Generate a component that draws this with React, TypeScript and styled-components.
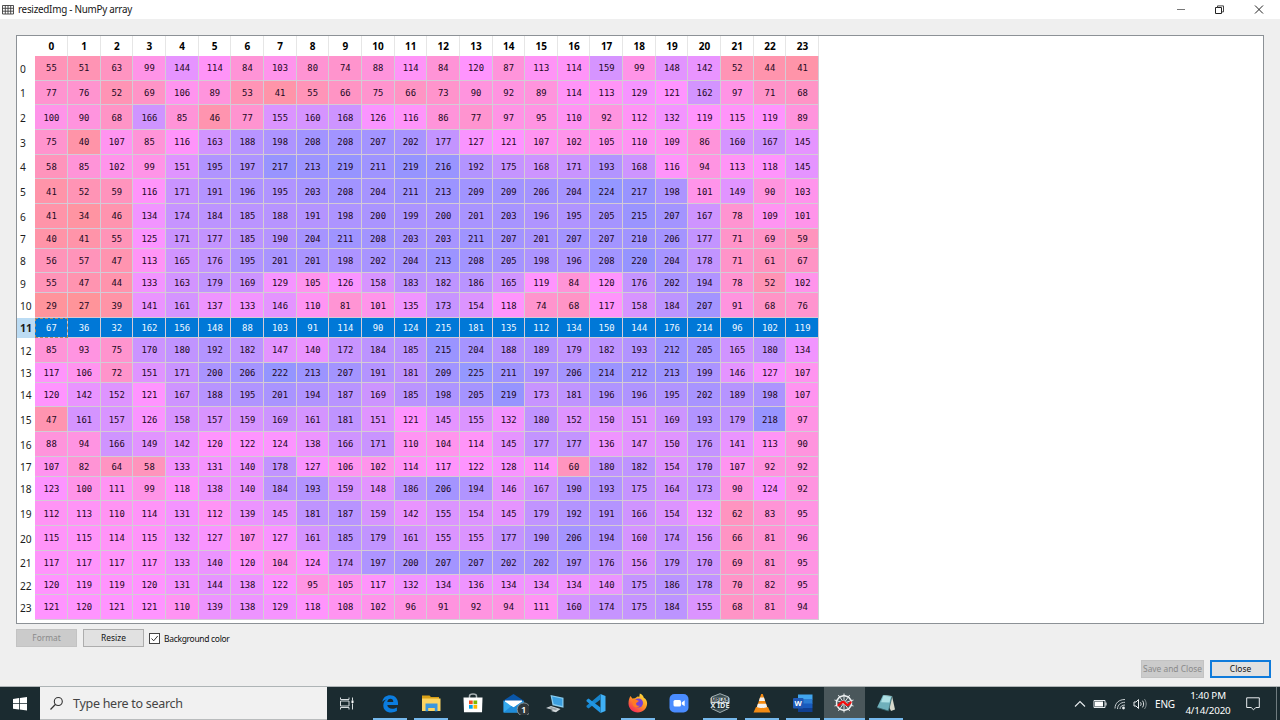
import React from 'react';
import styled, { createGlobalStyle } from 'styled-components';

const GlobalStyle = createGlobalStyle`
  html, body { margin: 0; padding: 0; overflow: hidden; }
  *, *::before, *::after { box-sizing: border-box; }
`;

const UI_FONT = '"Noto Sans", "Open Sans", sans-serif';
const SMALL_FONT = '"Noto Sans", "DejaVu Sans", sans-serif';

const DATA: number[][] = [
  [55, 51, 63, 99, 144, 114, 84, 103, 80, 74, 88, 114, 84, 120, 87, 113, 114, 159, 99, 148, 142, 52, 44, 41],
  [77, 76, 52, 69, 106, 89, 53, 41, 55, 66, 75, 66, 73, 90, 92, 89, 114, 113, 129, 121, 162, 97, 71, 68],
  [100, 90, 68, 166, 85, 46, 77, 155, 160, 168, 126, 116, 86, 77, 97, 95, 110, 92, 112, 132, 119, 115, 119, 89],
  [75, 40, 107, 85, 116, 163, 188, 198, 208, 208, 207, 202, 177, 127, 121, 107, 102, 105, 110, 109, 86, 160, 167, 145],
  [58, 85, 102, 99, 151, 195, 197, 217, 213, 219, 211, 219, 216, 192, 175, 168, 171, 193, 168, 116, 94, 113, 118, 145],
  [41, 52, 59, 116, 171, 191, 196, 195, 203, 208, 204, 211, 213, 209, 209, 206, 204, 224, 217, 198, 101, 149, 90, 103],
  [41, 34, 46, 134, 174, 184, 185, 188, 191, 198, 200, 199, 200, 201, 203, 196, 195, 205, 215, 207, 167, 78, 109, 101],
  [40, 41, 55, 125, 171, 177, 185, 190, 204, 211, 208, 203, 203, 211, 207, 201, 207, 207, 210, 206, 177, 71, 69, 59],
  [56, 57, 47, 113, 165, 176, 195, 201, 201, 198, 202, 204, 213, 208, 205, 198, 196, 208, 220, 204, 178, 71, 61, 67],
  [55, 47, 44, 133, 163, 179, 169, 129, 105, 126, 158, 183, 182, 186, 165, 119, 84, 120, 176, 202, 194, 78, 52, 102],
  [29, 27, 39, 141, 161, 137, 133, 146, 110, 81, 101, 135, 173, 154, 118, 74, 68, 117, 158, 184, 207, 91, 68, 76],
  [67, 36, 32, 162, 156, 148, 88, 103, 91, 114, 90, 124, 215, 181, 135, 112, 134, 150, 144, 176, 214, 96, 102, 119],
  [85, 93, 75, 170, 180, 192, 182, 147, 140, 172, 184, 185, 215, 204, 188, 189, 179, 182, 193, 212, 205, 165, 180, 134],
  [117, 106, 72, 151, 171, 200, 206, 222, 213, 207, 191, 181, 209, 225, 211, 197, 206, 214, 212, 213, 199, 146, 127, 107],
  [120, 142, 152, 121, 167, 188, 195, 201, 194, 187, 169, 185, 198, 205, 219, 173, 181, 196, 196, 195, 202, 189, 198, 107],
  [47, 161, 157, 126, 158, 157, 159, 169, 161, 181, 151, 121, 145, 155, 132, 180, 152, 150, 151, 169, 193, 179, 218, 97],
  [88, 94, 166, 149, 142, 120, 122, 124, 138, 166, 171, 110, 104, 114, 145, 177, 177, 136, 147, 150, 176, 141, 113, 90],
  [107, 82, 64, 58, 133, 131, 140, 178, 127, 106, 102, 114, 117, 122, 128, 114, 60, 180, 182, 154, 170, 107, 92, 92],
  [123, 100, 111, 99, 118, 138, 140, 184, 193, 159, 148, 186, 206, 194, 146, 167, 190, 193, 175, 164, 173, 90, 124, 92],
  [112, 113, 110, 114, 131, 112, 139, 145, 181, 187, 159, 142, 155, 154, 145, 179, 192, 191, 166, 154, 132, 62, 83, 95],
  [115, 115, 114, 115, 132, 127, 107, 127, 161, 185, 179, 161, 155, 155, 177, 190, 206, 194, 160, 174, 156, 66, 81, 96],
  [117, 117, 117, 117, 133, 140, 120, 104, 124, 174, 197, 200, 207, 207, 202, 202, 197, 176, 156, 179, 170, 69, 81, 95],
  [120, 119, 119, 120, 131, 144, 138, 122, 95, 105, 117, 132, 134, 136, 134, 134, 134, 140, 175, 186, 178, 70, 82, 95],
  [121, 120, 121, 121, 110, 139, 138, 129, 118, 108, 102, 96, 91, 92, 94, 111, 160, 174, 175, 184, 155, 68, 81, 94],
];

const SHORT_ROWS = [7, 9, 11, 13, 17, 22];
const SELECTED_ROW = 11;
const V_MIN = 27;
const V_MAX = 225;

// Hue runs from blue (maximum) to red (minimum), laid at 60% over white.
function heat(value: number): string {
  const hue = 0.66 + (0.33 * (V_MAX - value)) / (V_MAX - V_MIN);
  const channel = (n: number) => {
    const k = (n + hue * 6) % 6;
    const c = 1 - 0.7 * Math.max(0, Math.min(k, 4 - k, 1));
    return Math.round(255 * (0.6 * c + 0.4));
  };
  return `rgb(${channel(5)}, ${channel(3)}, ${channel(1)})`;
}

const Screen = styled.div`
  width: 1280px;
  height: 720px;
  display: flex;
  flex-direction: column;
  background: #efefef;
  color: #111;
  font-family: ${UI_FONT};
  overflow: hidden;
`;

const TitleBar = styled.header`
  height: 19px;
  flex: none;
  display: flex;
  align-items: center;
  background: #fff;
  padding-left: 2px;
`;

const Title = styled.span`
  margin-left: 4px;
  font-size: 9.9px;
  letter-spacing: -0.27px;
  line-height: 19px;
  flex: 1;
  color: #161616;
  white-space: nowrap;
`;

const WindowButtons = styled.div`
  display: flex;
  align-items: center;
  gap: 29px;
  padding-right: 16px;
`;

const Body = styled.main`
  flex: 1;
  min-height: 0;
  padding: 16px 16px 0;
  display: flex;
  flex-direction: column;
`;

const TableFrame = styled.section`
  width: 1248px;
  height: 589px;
  flex: none;
  background: #fff;
  border: 1px solid #8c9196;
  overflow: hidden;
`;

const Row = styled.div<{ $height: number }>`
  display: flex;
  height: ${(p) => p.$height}px;
`;

const RowHead = styled.div<{ $selected?: boolean }>`
  width: 18.333px;
  flex: none;
  display: flex;
  align-items: center;
  padding: 1px 0 0 3px;
  font-size: ${(p) => (p.$selected ? 10.6 : 10.2)}px;
  letter-spacing: -0.15px;
  font-weight: ${(p) => (p.$selected ? 700 : 400)};
  background: ${(p) => (p.$selected ? '#bcdcf4' : '#fff')};
  color: #1c1c1c;
`;

const ColumnHead = styled.div`
  width: 32.667px;
  flex: none;
  display: flex;
  align-items: center;
  justify-content: center;
  padding: 0 0 0.4px 0.6px;
  font-size: 10px;
  font-weight: 700;
  color: #000;
  border-right: 1px solid #e6e6e6;
`;

const Cell = styled.div<{ $color: string; $selected?: boolean; $focused?: boolean }>`
  width: 32.667px;
  flex: none;
  display: flex;
  align-items: center;
  justify-content: center;
  padding: 1px 0 0 0.6px;
  font-family: "DejaVu Sans Mono", monospace;
  font-size: 8.9px;
  background: ${(p) => p.$color};
  color: ${(p) => (p.$selected ? '#f2f9ff' : '#1c0822')};
  border-right: 1px solid #d4cbd6;
  border-bottom: 1px solid #d4cbd6;
  outline: ${(p) => (p.$focused ? '1px dashed #b08a62' : 'none')};
  outline-offset: -1px;
`;

const ToolRow = styled.div`
  display: flex;
  align-items: center;
  gap: 6px;
  height: 18px;
  margin-top: 5px;
`;

const PushButton = styled.button<{ $width: number; $kind?: 'disabled' | 'default' }>`
  width: ${(p) => p.$width}px;
  height: 18px;
  padding: 0;
  font-family: ${SMALL_FONT};
  font-size: 8.4px;
  line-height: 14px;
  white-space: nowrap;
  color: ${(p) => (p.$kind === 'disabled' ? '#8a8a8a' : '#111')};
  background: ${(p) => (p.$kind === 'disabled' ? '#cbcbcb' : '#e1e1e1')};
  border: ${(p) =>
    p.$kind === 'default' ? '2px solid #0f7bdb' : p.$kind === 'disabled' ? '1px solid #c3c3c3' : '1px solid #adadad'};
`;

const Check = styled.label`
  display: flex;
  align-items: center;
  gap: 4px;
  margin-left: -1px;
  font-family: ${SMALL_FONT};
  font-size: 8.5px;
  letter-spacing: -0.32px;
`;

const DialogButtons = styled.div`
  display: flex;
  justify-content: flex-end;
  gap: 6px;
  margin-top: 13px;
  margin-right: -7px;
`;

const Taskbar = styled.footer`
  height: 34px;
  flex: none;
  display: flex;
  background: #1b2b30;
  border-top: 1px solid #aeb4b6;
  color: #fff;
`;

const StartButton = styled.div`
  width: 40px;
  display: flex;
  align-items: center;
  justify-content: center;
`;

const SearchBox = styled.div`
  width: 287px;
  background: #f1f1f1;
  border-bottom: 1px solid #b9bcbd;
  display: flex;
  align-items: center;
  padding-left: 9px;
  gap: 9px;
  color: #444;
  font-size: 12.5px;
  letter-spacing: -0.28px;
`;

const TaskView = styled.div`
  width: 42.3px;
  display: flex;
  align-items: center;
  justify-content: center;
  padding-right: 3px;
`;

const AppItem = styled.div<{ $open?: boolean; $active?: boolean }>`
  width: 41.3px;
  flex: none;
  display: flex;
  flex-direction: column;
  align-items: center;
  justify-content: space-between;
  background: ${(p) => (p.$active ? '#4a575b' : 'transparent')};
  padding-top: 4px;
  &::after {
    content: '';
    height: 2px;
    width: ${(p) => (p.$active ? '100%' : '34px')};
    background: ${(p) => (p.$open || p.$active ? '#76b9ed' : 'transparent')};
  }
`;

const Tray = styled.div`
  margin-left: auto;
  display: flex;
  align-items: center;
  font-size: 10px;
`;

const TrayIcon = styled.span<{ $width: number }>`
  width: ${(p) => p.$width}px;
  display: flex;
  justify-content: center;
`;

const Language = styled.span`
  width: 32px;
  text-align: center;
  font-size: 10px;
  letter-spacing: -0.2px;
`;

const Clock = styled.div`
  width: 54px;
  text-align: center;
  font-size: 9.8px;
  letter-spacing: -0.15px;
  line-height: 15px;
  padding-bottom: 2px;
  white-space: nowrap;
`;

const NotificationArea = styled.div`
  width: 41px;
  padding-left: 11px;
`;

const ShowDesktop = styled.div`
  width: 4px;
  align-self: stretch;
  border-left: 1px solid #6f7b7f;
`;

const Drawing = styled.svg`
  display: block;
  flex: none;
`;

const Icon = ({ children, w = 24, h = 24 }: { children: React.ReactNode; w?: number; h?: number }) => (
  <Drawing width={w} height={h} viewBox={`0 0 ${w} ${h}`} fill="none">
    {children}
  </Drawing>
);

const svgFont = 'Noto Sans, sans-serif';

const EdgeIcon = () => (
  <Icon>
    <path
      d="M4.300 11C5 6.300 8.300 4.300 12 4.300c4.800 0 8 3.300 8 8v1.700H9.300c.3 2.500 2.300 3.700 4.900 3.700 1.800 0 3.400-.5 4.700-1.300v3.700c-1.500.8-3.500 1.300-5.600 1.300-4.900 0-8-2.700-8-7 0-2.700 1.300-5 3.700-6.200C6.800 8.600 5.300 9.500 4.300 11zm5-.1h6c0-2-1.100-3.100-2.900-3.100-1.700 0-2.800 1.200-3.100 3.100z"
      fill="#0b7de0"
    />
  </Icon>
);

const FolderIcon = () => (
  <Icon>
    <path d="M3 4.500h7.500l1.500 1.500H20v3H3z" fill="#d9a016" />
    <path d="M3 7.500h18.500V20H3z" fill="#fcd462" />
    <path d="M6.500 20.300v-7.800h12v7.800h-2.700v-3.300h-6.600v3.300z" fill="#3a96dd" />
  </Icon>
);

const StoreIcon = () => (
  <Icon>
    <path d="M8.500 8V5C8.500 2.300 15.500 2.300 15.500 5V8" stroke="#aab3b5" strokeWidth="1.500" />
    <path d="M2.500 6.500h19l-.5 14.700H3z" fill="#fff" />
    <path d="M8 9.500h3.700v3.700H8z" fill="#f25022" />
    <path d="M12.500 9.500h3.700v3.700h-3.700z" fill="#7fba00" />
    <path d="M8 14h3.700v3.700H8z" fill="#00a4ef" />
    <path d="M12.500 14h3.700v3.700h-3.700z" fill="#ffb900" />
  </Icon>
);

const MailIcon = () => (
  <Icon w={30}>
    <path d="M4.500 9.500L14.500 3l10 6.500V21h-20z" fill="#0a56a8" />
    <path d="M6 9.500h17v7H6z" fill="#fff" />
    <path d="M4.500 9.500l10 7 10-7v12h-20z" fill="#35a9ec" />
    <path d="M4.500 21.500l8-6.500 2 1.500L24.500 10v11.500z" fill="#1f8ddb" />
    <circle cx="24.800" cy="18.500" r="6.600" fill="#30373a" stroke="#8e979a" strokeWidth=".9" />
    <text x="24.800" y="22" textAnchor="middle" fontSize="9.500" fontWeight="600" fill="#fff" fontFamily={svgFont}>1</text>
  </Icon>
);

const ComputerIcon = () => (
  <Icon>
    <path d="M7.500 4l13 2.700v10L9.500 14.300z" fill="#8accee" />
    <path d="M9 5.500l10.300 2.200v7.300l-8.600-2z" fill="#3b9fe0" />
    <path d="M3 17l5-2 9.500 3-4.500 3.300-5-1.300 2-1z" fill="#d0d6d9" />
    <path d="M5.500 17l2.700-.9 6.300 1.900-2 1.200z" fill="#98a3a8" />
  </Icon>
);

const CodeIcon = () => (
  <Icon>
    <path d="M16.500 3l5 2v15l-5 2z" fill="#3fb0f5" />
    <path d="M16.500 3v5.500L4.500 17.500l-2-1.500v-1.300z" fill="#1684cc" />
    <path d="M16.500 22v-5.500L4.500 7.500l-2 1.500v1.300z" fill="#2196e3" />
  </Icon>
);

const FirefoxIcon = () => (
  <Icon>
    <defs>
      <linearGradient id="fox" x1="19" y1="3" x2="6" y2="21" gradientUnits="userSpaceOnUse">
        <stop offset="0" stopColor="#ffe545" />
        <stop offset=".45" stopColor="#ff9a20" />
        <stop offset="1" stopColor="#f5225f" />
      </linearGradient>
    </defs>
    <path d="M4.500 5l1.800 2.500 2.700-.2L11.500 5.500l1.800.3.500-3.300c2.500 1 3.300 2.200 4 4.200 2.200 1.200 3.500 3.500 3.300 6-.2 5-4.300 8.700-9.300 8.700-5.200 0-9.300-4-9.300-9C2.500 9.500 3.300 6.500 4.500 5z" fill="url(#fox)" />
    <circle cx="12.500" cy="12" r="4.500" fill="#7542d6" />
    <path d="M6.500 9c2.500-1.300 4.500-.3 6.500 1l-3 2.200c0 2 1.700 3 4 2.400-2 3-6.500 1.900-7.300-1.100z" fill="#ff7b22" />
  </Icon>
);

const ZoomIcon = () => (
  <Icon>
    <rect x="2.500" y="3" width="19" height="18.500" rx="5" fill="#4a8cff" />
    <rect x="6.500" y="9" width="7.500" height="6.500" rx="1.500" fill="#fff" />
    <path d="M14.700 11.500l3-2.200v6l-3-2.100z" fill="#fff" />
  </Icon>
);

const IdeIcon = () => (
  <Icon>
    <path d="M3.500 6L12 2.700 20.500 6v11.500L12 21.500l-8.500-4z" fill="#3a4d52" stroke="#a3b0b3" strokeWidth="1" />
    <path d="M2.500 6.800h19v5.200h-19z" fill="#cbd5d7" />
    <text x="12" y="11.300" textAnchor="middle" fontSize="5" fontWeight="700" fill="#1b2b30" fontFamily={svgFont} textLength="17" lengthAdjust="spacingAndGlyphs">MPLAB</text>
    <path d="M2 12.500h20v5H2z" fill="#1b2b30" />
    <text x="12" y="17.300" textAnchor="middle" fontSize="6.500" fontWeight="700" fill="#e5ecee" fontFamily={svgFont} textLength="19" lengthAdjust="spacingAndGlyphs">X IDE</text>
  </Icon>
);

const ConeIcon = () => (
  <Icon>
    <path d="M6 16h12l2.500 5.500h-17z" fill="#f28a14" />
    <path d="M11.200 3h1.600l4.700 14c-2 1.700-9 1.700-11 0z" fill="#f58b12" />
    <path d="M10 6.500h4l1.100 3.500H8.900z" fill="#f2f2f2" />
    <path d="M7.900 12.700h8.200l1 3.200c-2.500 1.300-7.700 1.300-10.200 0z" fill="#f2f2f2" />
  </Icon>
);

const WordIcon = () => (
  <Icon>
    <path d="M7 3.500h14.500v5H7z" fill="#41a5ee" />
    <path d="M7 8h14.500v5H7z" fill="#2b7cd3" />
    <path d="M7 12.500h14.500v4.500H7z" fill="#185abd" />
    <path d="M7 17h14.500v4H7z" fill="#103f91" />
    <rect x="2" y="7" width="10.500" height="10.500" rx="1" fill="#2059b5" />
    <text x="7.200" y="15.100" textAnchor="middle" fontSize="7.500" fontWeight="700" fill="#fff" fontFamily={svgFont}>W</text>
  </Icon>
);

const SpyderIcon = () => (
  <Icon>
    <g stroke="#eceff0" strokeWidth=".9">
      <path d="M12 2.500v19M2.500 9l19 6M2.500 15l19-6M6.300 4l11.400 16M17.700 4L6.300 20" />
      <path d="M12 4.500l4.500 1.500 2.900 3.700v4.600l-2.900 3.700L12 19.500 7.500 18l-2.900-3.700V9.700L7.500 6z" strokeWidth="1.500" />
    </g>
    <path d="M5.500 14.300c2.500.2 3.200-3.300 5.500-3.300s3 3.500 5 3 1.500-2.500 3.500-3" stroke="#f20d0d" strokeWidth="2.300" />
  </Icon>
);

const NotebookIcon = () => (
  <Icon>
    <path d="M9.500 4l8.500 1 3 13.500-4 1.500z" fill="#d7d9cc" />
    <path d="M9 4l9 1.300L14.500 20 3 16.500z" fill="#6fb0bb" />
    <path d="M9.500 4.800l7.500 1-1.500 5.700-8.500-.3z" fill="#aee0e4" />
    <path d="M3 16.500L14.500 20 18 5.300" stroke="#35656d" strokeWidth=".8" />
  </Icon>
);

const APPS: { name: string; icon: React.FC; open?: boolean; active?: boolean }[] = [
  { name: 'edge', icon: EdgeIcon, open: true },
  { name: 'files', icon: FolderIcon, open: true },
  { name: 'store', icon: StoreIcon },
  { name: 'mail', icon: MailIcon },
  { name: 'computer', icon: ComputerIcon },
  { name: 'code', icon: CodeIcon },
  { name: 'firefox', icon: FirefoxIcon, open: true },
  { name: 'zoom', icon: ZoomIcon },
  { name: 'ide', icon: IdeIcon, open: true },
  { name: 'player', icon: ConeIcon, open: true },
  { name: 'word', icon: WordIcon, open: true },
  { name: 'spyder', icon: SpyderIcon, active: true },
  { name: 'notebook', icon: NotebookIcon, open: true },
];

function ArrayTable() {
  return (
    <TableFrame>
      <Row $height={20}>
        <RowHead />
        {DATA[0].map((_, col) => (
          <ColumnHead key={col}>{col}</ColumnHead>
        ))}
      </Row>
      {DATA.map((values, row) => {
        const selected = row === SELECTED_ROW;
        return (
          <Row key={row} $height={SHORT_ROWS.includes(row) ? 20 : 24.667}>
            <RowHead $selected={selected}>{row}</RowHead>
            {values.map((value, col) => (
              <Cell
                key={col}
                $color={selected ? '#0078d7' : heat(value)}
                $selected={selected}
                $focused={selected && col === 0}
              >
                {value}
              </Cell>
            ))}
          </Row>
        );
      })}
    </TableFrame>
  );
}

export default function App() {
  return (
    <Screen>
      <GlobalStyle />
      <TitleBar>
        <Icon w={12} h={12}>
          <path d="M.5 1.500h11v8.500H.5zM.5 4.300h11M.5 7.200h11M3.300 1.500v8.500M6 1.500v8.500M8.700 1.500v8.500" stroke="#3d3d3d" strokeWidth=".9" />
        </Icon>
        <Title>resizedImg - NumPy array</Title>
        <WindowButtons>
          <Icon w={10} h={10}><path d="M1 4.500h8" stroke="#777" /></Icon>
          <Icon w={10} h={10}>
            <path d="M.5 2.500h6v6h-6z" stroke="#222" />
            <path d="M2.500 2.500V.9h6v6H6.500" stroke="#444" />
          </Icon>
          <Icon w={10} h={10}><path d="M1 .5l8 8M9 .5l-8 8" stroke="#222" /></Icon>
        </WindowButtons>
      </TitleBar>
      <Body>
        <ArrayTable />
        <ToolRow>
          <PushButton $width={61} $kind="disabled">Format</PushButton>
          <PushButton $width={61}>Resize</PushButton>
          <Check>
            <Icon w={11} h={11}>
              <rect x=".5" y=".5" width="10" height="10" fill="#fff" stroke="#444" />
              <path d="M2.500 5.500l2.200 2.300L8.700 3" stroke="#333" />
            </Icon>
            Background color
          </Check>
        </ToolRow>
        <DialogButtons>
          <PushButton $width={63} $kind="disabled">Save and Close</PushButton>
          <PushButton $width={61} $kind="default">Close</PushButton>
        </DialogButtons>
      </Body>
      <Taskbar>
        <StartButton>
          <Icon w={14} h={14}>
            <path d="M0 2l6-.9V6.300H0zM6.800 1L14 0v6.300H6.800zM0 7.100h6v5.400L0 11.700zM6.800 7.100H14V13.600l-7.200-1z" fill="#fff" />
          </Icon>
        </StartButton>
        <SearchBox>
          <Icon w={15} h={15}>
            <circle cx="9.300" cy="5.500" r="4" stroke="#333" strokeWidth="1.100" />
            <path d="M6.300 8.500L1.500 13.500" stroke="#333" strokeWidth="1.200" />
          </Icon>
          Type here to search
        </SearchBox>
        <TaskView>
          <Icon w={14} h={14}>
            <path d="M.5 .5v2h8.500v-2M.5 12.500v-2h8.500v2M.5 4h8.500v5H.5zM12.500 .5v3M12.500 6.500v6" stroke="#d5dbdd" />
            <path d="M11.500 3.500h2v2.500h-2z" fill="#fff" />
          </Icon>
        </TaskView>
        {APPS.map(({ name, icon: AppIcon, open, active }) => (
          <AppItem key={name} $open={open} $active={active}>
            <AppIcon />
          </AppItem>
        ))}
        <Tray>
          <TrayIcon $width={20}>
            <Icon w={12} h={12}><path d="M1 8.500l5-5 5 5" stroke="#e8ecee" strokeWidth="1.100" /></Icon>
          </TrayIcon>
          <TrayIcon $width={20}>
            <Icon w={14} h={12}>
              <path d="M1 2.500h11v7H1z" stroke="#e8ecee" />
              <path d="M2 3.500h8v5H2zM12.500 4.500h1v3h-1z" fill="#fff" />
            </Icon>
          </TrayIcon>
          <TrayIcon $width={20}>
            <Icon w={12} h={12}>
              <path d="M1 10.500C1 5 5 1.500 11 1.500M3.500 11C3.500 7 6.500 4.300 11 4.300M6 11c0-2.500 2-4 5-4" stroke="#c6cccf" />
              <circle cx="9.500" cy="10" r="1.400" fill="#e8ecee" />
            </Icon>
          </TrayIcon>
          <TrayIcon $width={19}>
            <Icon w={14} h={12}>
              <path d="M1 4h2L5.500 1.500v9L3 8H1z" stroke="#e8ecee" />
              <path d="M7.500 4.300c.8 1 .8 2.500 0 3.500M9.500 2.700c1.500 2 1.500 4.700 0 6.700" stroke="#dfe4e5" />
              <path d="M11.500 1.200c2.200 2.800 2.200 6.900 0 9.700" stroke="#8d989b" />
            </Icon>
          </TrayIcon>
          <Language>ENG</Language>
          <Clock>
            1:40 PM
            <br />
            4/14/2020
          </Clock>
          <NotificationArea>
            <Icon w={14} h={14}>
              <path d="M.7 .8h12.600v9.700H9.800L7.500 12.800 5.200 10.500H.7z" stroke="#e8ecee" />
            </Icon>
          </NotificationArea>
          <ShowDesktop />
        </Tray>
      </Taskbar>
    </Screen>
  );
}
